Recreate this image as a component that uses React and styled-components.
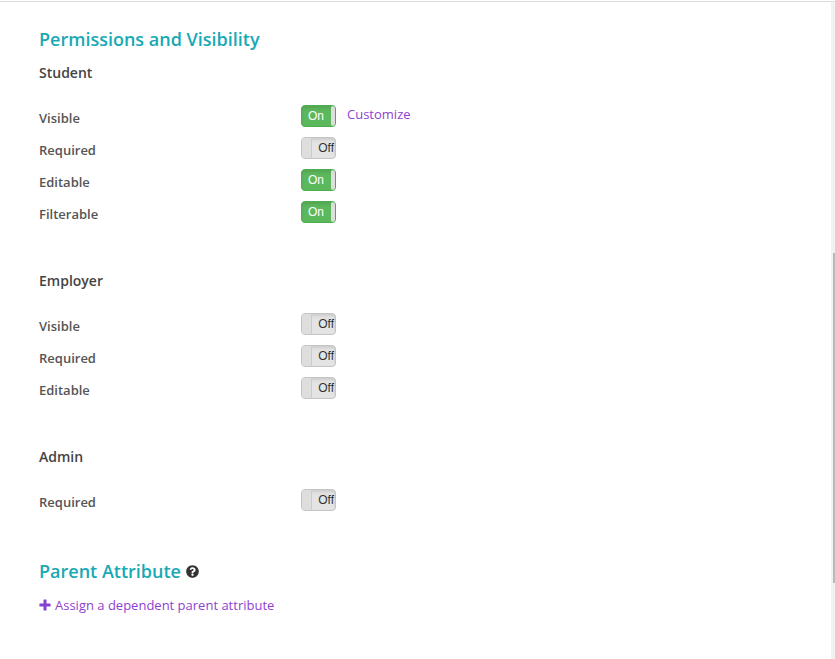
import React from "react";
import styled, { createGlobalStyle } from "styled-components";
import { FaQuestionCircle } from "react-icons/fa";

const GlobalStyle = createGlobalStyle`
  html, body {
    margin: 0;
    padding: 0;
    height: 100%;
    overflow: hidden;
    background: #fff;
    font-family: "Open Sans", sans-serif;
  }
`;

const Page = styled.div`
  display: flex;
  width: 835px;
  height: 658px;
  margin-top: 1px;
  overflow: hidden;
  border-top: 1px solid #dcdcdc;
  box-sizing: border-box;
`;

const Content = styled.main`
  flex: 1;
  padding: 24px 0 0 39px;
`;

const Track = styled.div`
  width: 4px;
  background: #f1f1f1;
  display: flex;
  justify-content: flex-end;
  padding-top: 251px;
  box-sizing: border-box;
`;

const Thumb = styled.div`
  width: 2px;
  height: 330px;
  background: #b9b9b9;
`;

const Heading = styled.h2`
  margin: 0;
  font-size: 18px;
  line-height: 26px;
  font-weight: 600;
  color: #18a9b5;
  display: flex;
  align-items: center;
  gap: 5px;
`;

const Group = styled.section`
  margin-bottom: ${(p) => p.$gap}px;
`;

const GroupTitle = styled.h3`
  margin: 0;
  padding-top: 11px;
  font-size: 14px;
  line-height: 20px;
  font-weight: 600;
  color: #444;
  margin-bottom: 17px;
`;

const Row = styled.div`
  display: flex;
  align-items: center;
  height: 32px;
`;

const Label = styled.label`
  width: 262px;
  font-size: 13px;
  font-weight: 600;
  color: #555;
  padding-top: 4px;
`;

const Switch = styled.div`
  width: 35px;
  height: 22px;
  box-sizing: border-box;
  border-radius: 4px;
  border: 1px solid ${(p) => (p.$on ? "#4cae4c" : "#c4c4c4")};
  background: ${(p) => (p.$on ? "#5cb85c" : "#e4e4e4")};
  box-shadow: inset 0 2px 3px rgba(0, 0, 0, 0.1);
  display: flex;
  flex-direction: ${(p) => (p.$on ? "row" : "row-reverse")};
  justify-content: space-between;
  overflow: hidden;
`;

const SwitchText = styled.span`
  font-family: "Liberation Sans", Arial, sans-serif;
  font-size: 12px;
  line-height: 20px;
  color: ${(p) => (p.$on ? "#fff" : "#333")};
  padding: ${(p) => (p.$on ? "0 0 0 6px" : "0 1px 0 0")};
`;

const Handle = styled.span`
  width: ${(p) => (p.$on ? 4 : 9)}px;
  background: #dedede;
  border-right: ${(p) => (p.$on ? "none" : "1px solid #ccc")};
  border-radius: ${(p) => (p.$on ? "2px 0 0 2px" : "0")};
`;

const PurpleLink = styled.a`
  font-size: 13px;
  color: #8f3fd1;
  text-decoration: none;
  display: flex;
  align-items: center;
`;

const Customize = styled(PurpleLink)`
  margin-left: 11px;
  margin-top: -4px;
`;

const AssignLink = styled(PurpleLink)`
  margin-top: 12px;
  gap: 4px;
`;

const HelpIcon = styled(FaQuestionCircle)`
  font-size: 13px;
  color: #333;
`;

const Toggle = ({ on }) => (
  <Switch $on={on}>
    <SwitchText $on={on}>{on ? "On" : "Off"}</SwitchText>
    <Handle $on={on} />
  </Switch>
);

const groups = [
  {
    title: "Student",
    gap: 32,
    rows: [
      ["Visible", true, true],
      ["Required", false],
      ["Editable", true],
      ["Filterable", true],
    ],
  },
  {
    title: "Employer",
    gap: 32,
    rows: [
      ["Visible", false],
      ["Required", false],
      ["Editable", false],
    ],
  },
  {
    title: "Admin",
    gap: 42,
    rows: [["Required", false]],
  },
];

const App = () => (
  <>
    <GlobalStyle />
    <Page>
      <Content>
        <Heading>Permissions and Visibility</Heading>
        {groups.map((group) => (
          <Group key={group.title} $gap={group.gap}>
            <GroupTitle>{group.title}</GroupTitle>
            {group.rows.map(([name, on, custom]) => (
              <Row key={name}>
                <Label>{name}</Label>
                <Toggle on={on} />
                {custom && <Customize href="#">Customize</Customize>}
              </Row>
            ))}
          </Group>
        ))}
        <Heading>
          Parent Attribute
          <HelpIcon />
        </Heading>
        <AssignLink href="#">
          <svg width="12" height="12" viewBox="0 0 12 12">
            <path d="M4.5 1a.6.6 0 0 1 .6-.6h1.8a.6.6 0 0 1 .6.6v3.5H11a.6.6 0 0 1 .6.6v1.8a.6.6 0 0 1-.6.6H7.5V11a.6.6 0 0 1-.6.6H5.1a.6.6 0 0 1-.6-.6V7.5H1a.6.6 0 0 1-.6-.6V5.100a.6.6 0 0 1 .6-.6h3.500z" fill="#8440cf" />
          </svg>
          Assign a dependent parent attribute
        </AssignLink>
      </Content>
      <Track>
        <Thumb />
      </Track>
    </Page>
  </>
);

export default App;
